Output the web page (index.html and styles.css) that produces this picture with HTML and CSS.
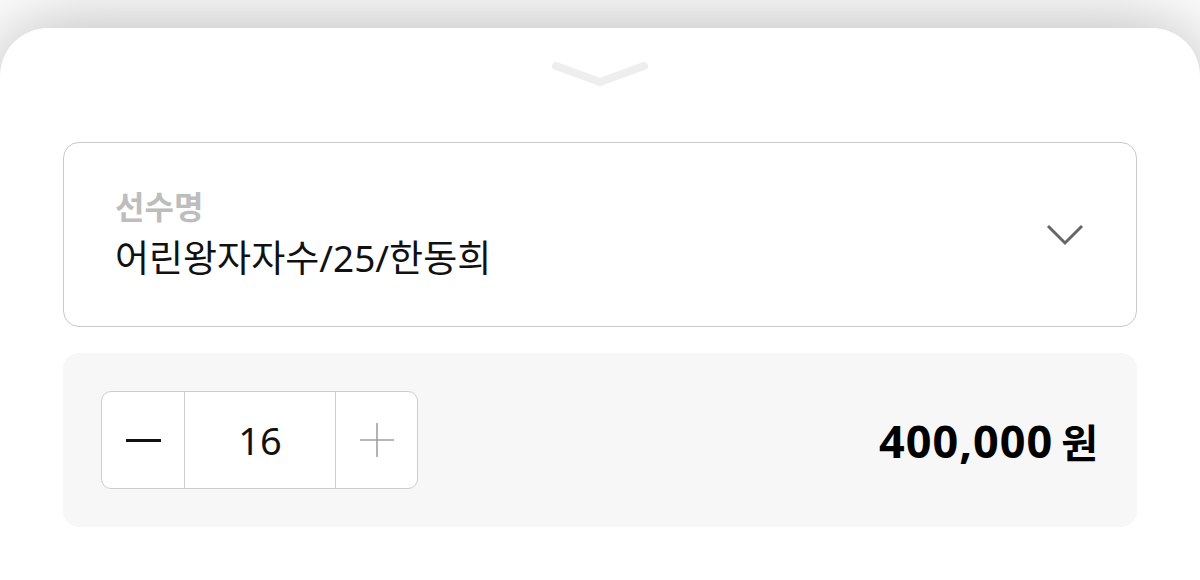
FILE: index.html
```html
<!DOCTYPE html>
<html lang="ko">
<head>
    <meta charset="utf-8">
    <title>옵션 선택</title>
    <link rel="stylesheet" href="styles.css">
</head>
<body>

    <div class="sheet">
        <div class="handle">
            <svg width="100" height="32" viewBox="0 0 100 32">
                <path d="M6 8 L50 24 L94 8" fill="none" stroke="#eeeeee" stroke-width="8" stroke-linecap="round" stroke-linejoin="round"/>
            </svg>
        </div>

        <div class="select-box">
            <div class="select-text">
                <div class="select-label">선수명</div>
                <div class="select-value">어린왕자자수/25/한동희</div>
            </div>
            <svg class="select-arrow" width="40" height="24" viewBox="0 0 40 24">
                <path d="M3 3 L20 20 L37 3" fill="none" stroke="#666666" stroke-width="3"/>
            </svg>
        </div>

        <div class="qty-box">
            <div class="stepper">
                <div class="step-btn minus"><span class="minus-bar"></span></div>
                <div class="step-count">16</div>
                <div class="step-btn plus">
                    <svg width="36" height="36" viewBox="0 0 36 36">
                        <path d="M18 1 V35 M1 18 H35" stroke="#a0a0a0" stroke-width="1.6"/>
                    </svg>
                </div>
            </div>
            <div class="price">400,000<span class="won">원</span></div>
        </div>
    </div>

</body>
</html>
```

FILE: styles.css
```css
body {
    margin: 0;
    background: #ffffff;
    font-family: "Noto Sans", "Noto Sans CJK KR", sans-serif;
    overflow: hidden;
}
.sheet {
    margin-top: 28px;
    height: 552px;
    box-sizing: border-box;
    padding: 0 63px;
    background: #ffffff;
    border-radius: 48px 48px 0 0;
    box-shadow: 0 0 80px rgba(0, 0, 0, 0.3);
}
.handle {
    display: flex;
    justify-content: center;
    height: 114px;
    box-sizing: border-box;
    padding-top: 30px;
}
.select-box {
    display: flex;
    align-items: center;
    justify-content: space-between;
    height: 185px;
    box-sizing: border-box;
    padding: 0 51px;
    border: 1px solid #c9c9c9;
    border-radius: 16px;
}
.select-label {
    font-size: 32px;
    font-weight: 700;
    color: #bdbdbd;
    line-height: 40px;
}
.select-value {
    margin-top: 6px;
    font-size: 37px;
    color: #111111;
    line-height: 50px;
}
.qty-box {
    display: flex;
    align-items: center;
    justify-content: space-between;
    margin-top: 26px;
    height: 174px;
    box-sizing: border-box;
    padding: 0 38px;
    background: #f7f7f7;
    border-radius: 16px;
}
.stepper {
    display: flex;
    width: 317px;
    height: 98px;
    box-sizing: border-box;
    border: 1px solid #cdcdcd;
    border-radius: 10px;
    background: #ffffff;
    overflow: hidden;
}
.step-btn {
    display: flex;
    align-items: center;
    justify-content: center;
    width: 82px;
}
.minus-bar {
    width: 35px;
    height: 3px;
    background: #111111;
}
.step-count {
    display: flex;
    align-items: center;
    justify-content: center;
    width: 150px;
    border-left: 1px solid #cdcdcd;
    border-right: 1px solid #cdcdcd;
    font-size: 38px;
    color: #111111;
}
.plus {
    flex: 1;
}
.price {
    font-size: 45px;
    font-weight: 700;
    color: #000000;
    letter-spacing: 1px;
}
.won {
    margin-left: 8px;
    font-size: 40px;
}
```
